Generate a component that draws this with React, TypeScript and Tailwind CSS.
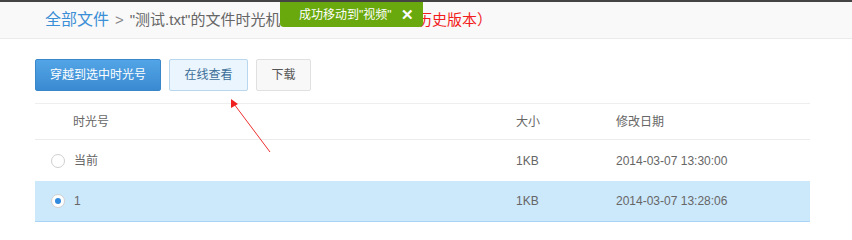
const font = { fontFamily: '"Liberation Sans", "Noto Sans CJK SC", sans-serif' };

function Radio({ checked }: { checked?: boolean }) {
  return (
    <span className="flex h-[14px] w-[14px] items-center justify-center rounded-full border border-[#cfcfcf] bg-white">
      {checked && <span className="h-[6px] w-[6px] rounded-full bg-[#2f8ae0]" />}
    </span>
  );
}

const rows = [
  { name: "当前", size: "1KB", date: "2014-03-07 13:30:00", checked: false },
  { name: "1", size: "1KB", date: "2014-03-07 13:28:06", checked: true },
];

export default function App() {
  return (
    <div className="relative h-[238px] w-[852px] overflow-hidden bg-white text-[12px] text-[#666]" style={font}>
      <div className="h-[2px] bg-[#444]" />
      <div className="flex h-[37px] items-center border-b border-[#ebebeb] bg-[#f9f9f9] pl-[45px] text-[15px]">
        <span className="text-[16px] text-[#3b8fd6]">全部文件</span>
        <span className="mx-[6px] text-[#888]">&gt;</span>
        <span className="text-[#666]">"测试.txt"的文件时光机</span>
        <span className="text-[#f21d1d]">（最多保存最近30天历史版本）</span>
      </div>

      <div className="absolute left-[280px] top-[2px] flex h-[25px] w-[143px] items-center justify-between rounded-b-[4px] bg-[#6aa90d] pl-[19px] pr-[9px] text-[12px] text-white">
        <span>成功移动到"视频"</span>
        <span className="text-[15px] font-bold leading-none">✕</span>
      </div>

      <div className="mx-[35px] mt-[20px] flex gap-[8px]">
        <button className="h-[32px] w-[126px] rounded-[2px] border border-[#3a86c8] bg-gradient-to-b from-[#52a5e6] to-[#3a8ad1] text-white">
          穿越到选中时光号
        </button>
        <button className="h-[32px] w-[79px] rounded-[2px] border border-[#b8d7ef] bg-[#eaf5fd] text-[#3d6e99]">
          在线查看
        </button>
        <button className="h-[32px] w-[55px] rounded-[2px] border border-[#e0e0e0] bg-[#f8f8f8] text-[#555]">
          下载
        </button>
      </div>

      <div className="mx-[35px] mt-[12px] w-[775px] border-t border-[#eeeeee]">
        <div className="flex h-[36px] items-center border-b border-[#ececec]">
          <span className="ml-[38px] w-[443px]">时光号</span>
          <span className="w-[100px]">大小</span>
          <span>修改日期</span>
        </div>
        {rows.map((r) => (
          <div
            key={r.name}
            className={
              r.checked
                ? "flex h-[41px] items-center border-b border-[#a9d4f5] bg-[#cce8fb]"
                : "flex h-[41px] items-center"
            }
          >
            <span className="ml-[16px] w-[23px]">
              <Radio checked={r.checked} />
            </span>
            <span className="w-[442px]">{r.name}</span>
            <span className="w-[100px]">{r.size}</span>
            <span>{r.date}</span>
          </div>
        ))}
      </div>

      <svg className="pointer-events-none absolute left-0 top-0" width="852" height="238">
        <line x1="270" y1="152" x2="234" y2="104" stroke="#f03030" strokeWidth="1" />
        <polygon points="231,99 231,108 238,104" fill="#f02020" />
      </svg>
    </div>
  );
}
